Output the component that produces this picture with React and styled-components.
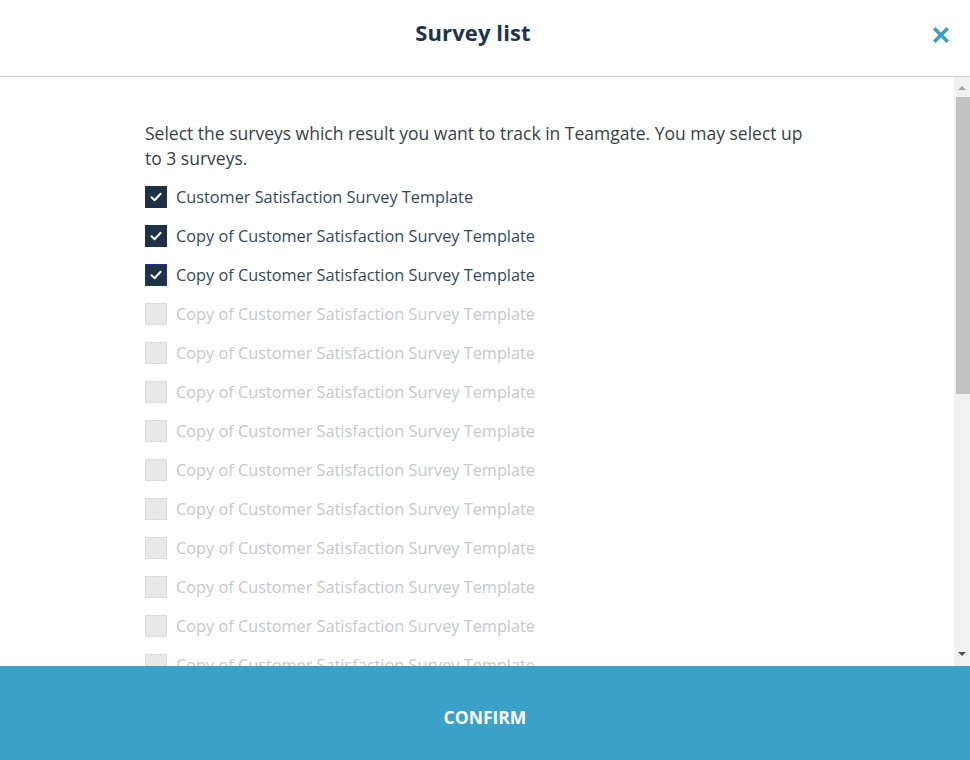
import { useState } from "react";
import styled, { createGlobalStyle } from "styled-components";

const GlobalStyle = createGlobalStyle`
  html, body {
    margin: 0;
    padding: 0;
    height: 100%;
    overflow: hidden;
  }
  body {
    font-family: "Open Sans", "Noto Sans", sans-serif;
    background: #ffffff;
  }
  #root {
    height: 100%;
  }
`;

const surveys = [
  "Customer Satisfaction Survey Template",
  ...Array.from({ length: 21 }, () => "Copy of Customer Satisfaction Survey Template"),
];

const CheckIcon = () => (
  <svg width="14" height="14" viewBox="0 0 14 14" fill="none">
    <path
      d="M2.5 7.2 L5.6 10.2 L11.6 3.8"
      stroke="#ffffff"
      strokeWidth="2"
      strokeLinecap="round"
      strokeLinejoin="round"
    />
  </svg>
);

const CloseIcon = () => (
  <svg width="16" height="16" viewBox="0 0 16 16">
    <path
      d="M2.5 2.5 L13.5 13.5 M13.5 2.5 L2.5 13.5"
      stroke="#3aa0c8"
      strokeWidth="3.6"
      strokeLinecap="square"
    />
  </svg>
);

const App = () => {
  const [selected, setSelected] = useState([0, 1, 2]);
  const limitReached = selected.length >= 3;

  const toggle = (i) => {
    if (selected.includes(i)) {
      setSelected(selected.filter((s) => s !== i));
    } else if (!limitReached) {
      setSelected([...selected, i]);
    }
  };

  return (
    <Wrapper>
      <GlobalStyle />
      <Header>
        <Title>Survey list</Title>
        <CloseButton type="button" aria-label="close">
          <CloseIcon />
        </CloseButton>
      </Header>
      <Middle>
        <Body>
          <Content>
            <Intro>
              Select the surveys which result you want to track in Teamgate.
              You may select up to 3 surveys.
            </Intro>
            <List>
              {surveys.map((name, i) => {
                const checked = selected.includes(i);
                const disabled = !checked && limitReached;
                return (
                  <Row key={i} onClick={() => toggle(i)}>
                    <Box $checked={checked} $focus={i === 2}>
                      {checked && <CheckIcon />}
                    </Box>
                    <Label $disabled={disabled}>{name}</Label>
                  </Row>
                );
              })}
            </List>
          </Content>
        </Body>
        <Scrollbar>
          <ArrowButton $up />
          <Track>
            <Thumb />
          </Track>
          <ArrowButton />
        </Scrollbar>
      </Middle>
      <Footer type="button">CONFIRM</Footer>
    </Wrapper>
  );
};

const Wrapper = styled.div`
  height: 760px;
  display: flex;
  flex-direction: column;
  background: #fff;
`;

const Header = styled.header`
  height: 77px;
  box-sizing: border-box;
  flex-shrink: 0;
  display: flex;
  align-items: center;
  justify-content: center;
  position: relative;
  border-bottom: 1px solid #cfcfcf;
  padding: 0 24px 12px 0;
`;

const Title = styled.h1`
  margin: 0;
  font-size: 22px;
  font-weight: 700;
  color: #1e3549;
  letter-spacing: 0.1px;
`;

const CloseButton = styled.button`
  position: absolute;
  right: 19px;
  top: 25px;
  width: 20px;
  height: 20px;
  padding: 0;
  border: none;
  background: transparent;
  display: flex;
  align-items: center;
  justify-content: center;
  cursor: pointer;
`;

const Middle = styled.div`
  flex: 1;
  min-height: 0;
  display: flex;
`;

const Body = styled.div`
  flex: 1;
  overflow: hidden;
`;

const Scrollbar = styled.div`
  width: 16px;
  flex-shrink: 0;
  background: #f1f1f1;
  display: flex;
  flex-direction: column;
`;

const ArrowButton = styled.div`
  height: 20px;
  flex-shrink: 0;
  display: flex;
  align-items: center;
  justify-content: center;
  &::before {
    content: "";
    width: 0;
    height: 0;
    border-left: 4px solid transparent;
    border-right: 4px solid transparent;
    ${({ $up }) =>
      $up
        ? "border-bottom: 4px solid #a3a3a3; margin-top: 2px;"
        : "border-top: 4px solid #505050; margin-top: -4px;"}
  }
`;

const Track = styled.div`
  flex: 1;
  padding-left: 2px;
`;

const Thumb = styled.div`
  height: 297px;
  background: #c1c1c1;
`;

const Content = styled.div`
  width: 672px;
  padding: 44px 0 40px 145px;
`;

const Intro = styled.p`
  margin: 0 0 6px;
  font-size: 17.5px;
  line-height: 25px;
  color: #3a3f45;
  letter-spacing: 0;
`;

const List = styled.div`
  display: flex;
  flex-direction: column;
`;

const Row = styled.label`
  display: flex;
  align-items: center;
  height: 39px;
  gap: 9px;
  cursor: pointer;
`;

const Box = styled.span`
  width: 22px;
  height: 22px;
  box-sizing: border-box;
  flex-shrink: 0;
  display: flex;
  align-items: center;
  justify-content: center;
  background: ${({ $checked }) => ($checked ? "#1d3246" : "#e8e8e8")};
  border: 1px solid
    ${({ $checked, $focus }) =>
      $focus ? "#1a2fb0" : $checked ? "#1d3246" : "#dcdcdc"};
`;

const Label = styled.span`
  font-size: 16.3px;
  color: ${({ $disabled }) => ($disabled ? "#c6c8ca" : "#34485c")};
`;

const Footer = styled.button`
  height: 94px;
  flex-shrink: 0;
  border: none;
  background: #3aa1c9;
  color: #fff;
  font-family: "Open Sans", "Noto Sans", sans-serif;
  font-size: 17.5px;
  font-weight: 700;
  cursor: pointer;
  padding: 8px 0 0;
`;

export default App;
